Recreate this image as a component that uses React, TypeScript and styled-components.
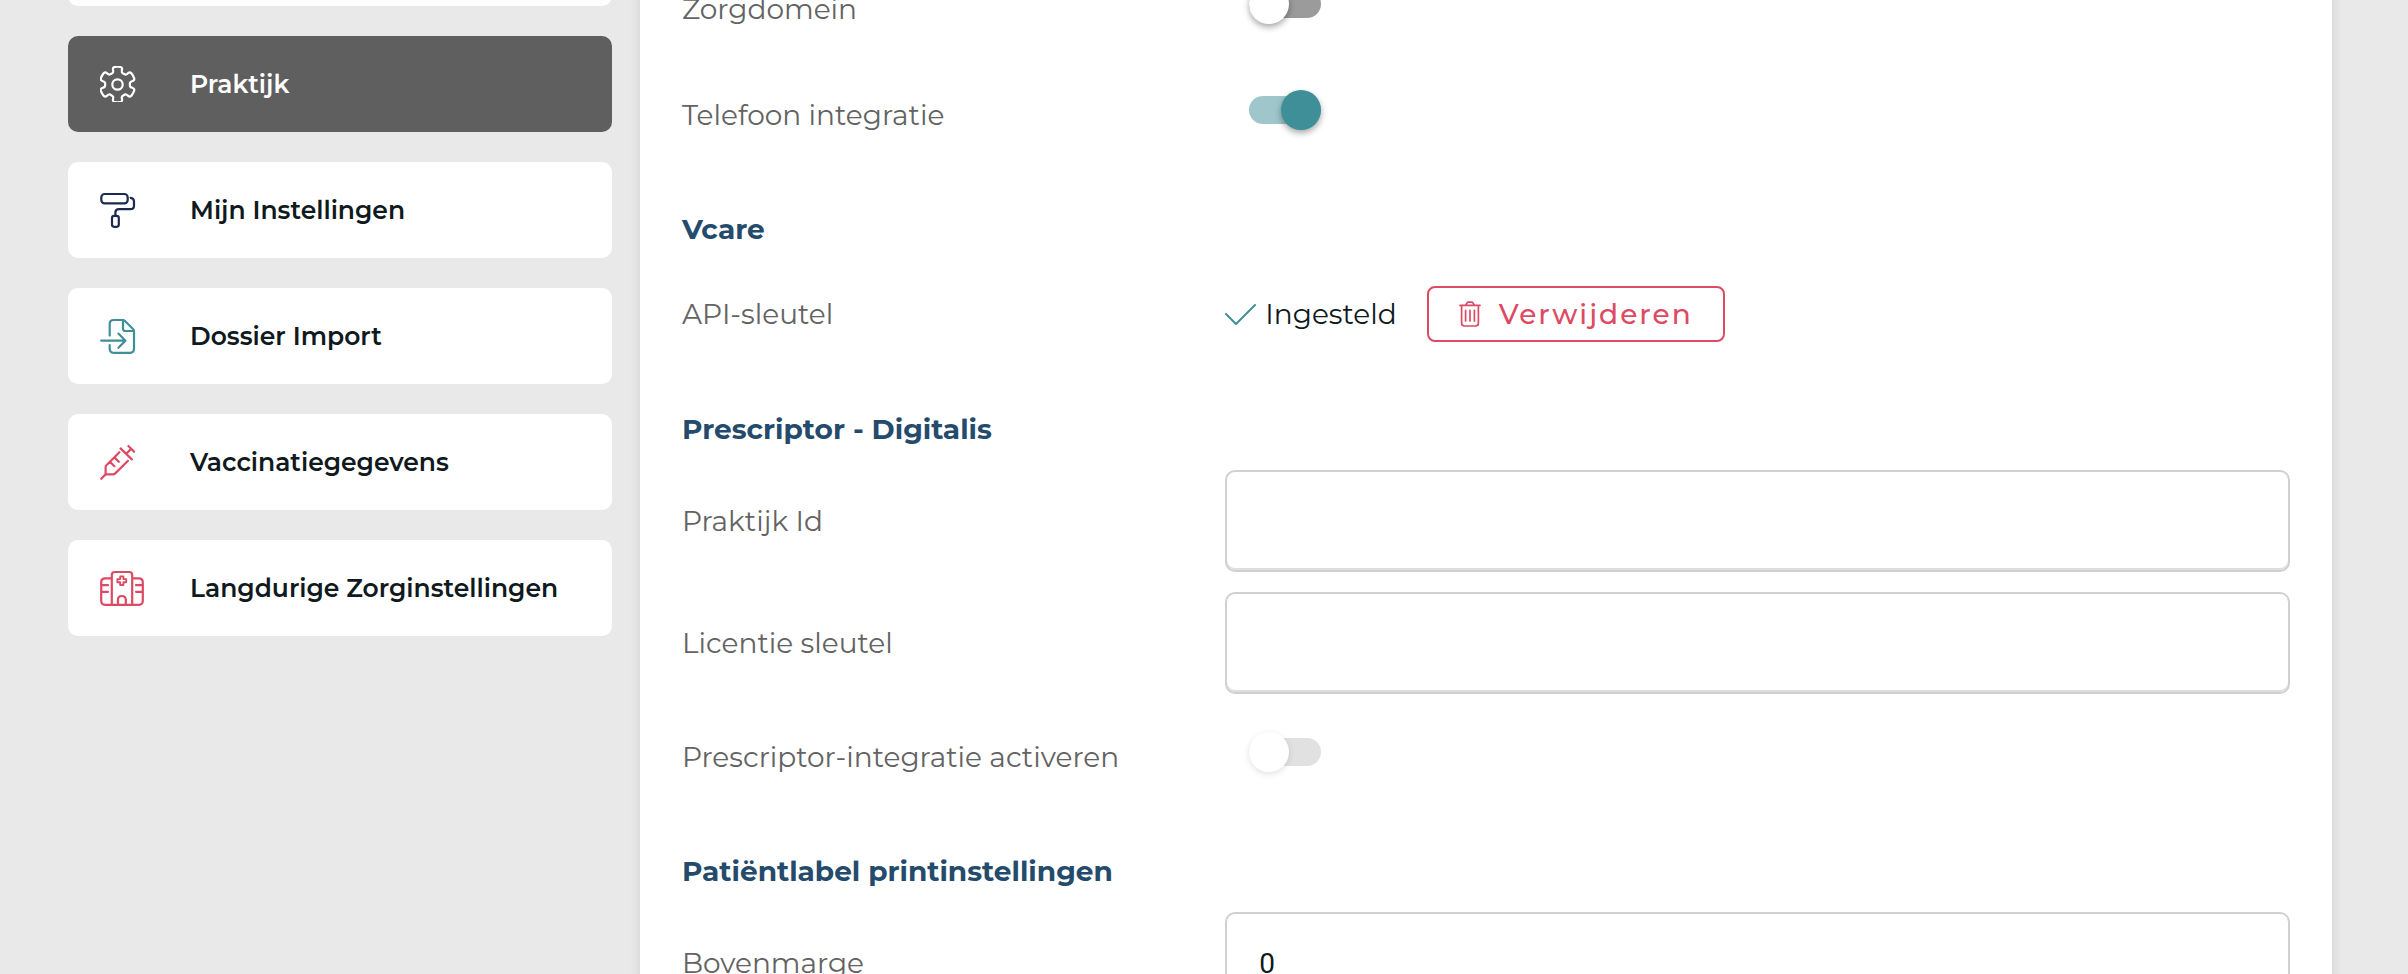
import React, { useState } from "react";
import styled, { createGlobalStyle } from "styled-components";

const color = {
  page: "#e9e9e9",
  active: "#5f5f5f",
  ink: "#0f1a20",
  label: "#636363",
  heading: "#254b6c",
  teal: "#3f8f98",
  red: "#dc4a64",
  navy: "#1c2a52",
  line: "#d0d0d0",
};

const GlobalStyle = createGlobalStyle`
  * { box-sizing: border-box; }
  body {
    margin: 0;
    background: ${color.page};
    color: ${color.ink};
    font-family: Montserrat, Inter, "Open Sans", sans-serif;
  }
`;

const Viewport = styled.div`
  height: 100vh;
  overflow: hidden;
`;

const Page = styled.div`
  display: flex;
  gap: 28px;
  margin-top: -90px;
  padding: 0 76px 0 68px;
`;

const Sidebar = styled.nav`
  flex: 0 0 544px;
  display: flex;
  flex-direction: column;
  gap: 30px;
`;

const NavCard = styled.a<{ $active?: boolean }>`
  display: flex;
  align-items: center;
  height: 96px;
  padding: 0 32px;
  border-radius: 10px;
  background: ${(p) => (p.$active ? color.active : "#fff")};
  color: ${(p) => (p.$active ? "#fff" : color.ink)};
  font-size: 25px;
  font-weight: 600;
  line-height: 34px;
  white-space: nowrap;
  text-decoration: none;
`;

const IconSlot = styled.span<{ $color: string }>`
  display: flex;
  flex: 0 0 90px;
  color: ${(p) => p.$color};
`;

const Panel = styled.main`
  flex: 1;
  display: flex;
  flex-direction: column;
  min-width: 0;
  padding: 46px 42px;
  background: #fff;
  box-shadow: 0 0 10px rgba(0, 0, 0, 0.12);
`;

const Heading = styled.h2`
  margin: 44px 0 14px;
  color: ${color.heading};
  font-size: 28px;
  font-weight: 700;
  line-height: 34px;
`;

const Row = styled.div`
  display: grid;
  grid-template-columns: 1fr 2fr;
  column-gap: 11px;
  align-items: center;
  padding: 10px 0;
`;

const ToggleRow = styled(Row)`
  height: 96px;
  margin-bottom: 10px;
`;

const KeyRow = styled(Row)`
  height: 108px;
`;

const Label = styled.label`
  color: ${color.label};
  font-size: 28px;
  font-weight: 400;
  line-height: 34px;
  white-space: nowrap;

  ${ToggleRow} & {
    padding-top: 10px;
  }
`;

const TextBox = styled.input`
  width: 100%;
  height: 102px;
  padding: 0 32px;
  border: 2px solid ${color.line};
  border-radius: 10px;
  background: #fff;
  box-shadow: inset 0 -2px 0 #dedede;
  color: ${color.ink};
  font-family: Roboto, sans-serif;
  font-size: 28px;
  font-weight: 400;
`;

const Switch = styled.input`
  appearance: none;
  position: relative;
  width: 72px;
  height: 28px;
  margin: 0 0 0 24px;
  border-radius: 14px;
  background: #9b9b9b;

  &::before {
    content: "";
    position: absolute;
    top: -6px;
    left: 0;
    width: 40px;
    height: 40px;
    border-radius: 50%;
    background: #fff;
    box-shadow: 0 3px 6px rgba(0, 0, 0, 0.35);
  }

  &:checked {
    background: #9fc6cb;
  }

  &:checked::before {
    left: 32px;
    background: ${color.teal};
  }

  &:disabled {
    background: #e1e1e1;
  }

  &:disabled::before {
    box-shadow: 0 2px 6px rgba(0, 0, 0, 0.12);
  }
`;

const KeyStatus = styled.div`
  display: flex;
  align-items: center;
  gap: 30px;
`;

const StatusText = styled.span`
  display: flex;
  align-items: center;
  gap: 8px;
  font-size: 28px;
  line-height: 34px;

  svg {
    color: ${color.teal};
  }
`;

const RemoveButton = styled.button`
  display: flex;
  align-items: center;
  gap: 18px;
  height: 56px;
  padding: 0 30px;
  border: 2px solid ${color.red};
  border-radius: 8px;
  background: #fff;
  color: ${color.red};
  font-family: inherit;
  font-size: 28px;
  font-weight: 500;
  line-height: 34px;
  letter-spacing: 2px;
`;

const Svg = ({ width, height, children }: { width: number; height: number; children: React.ReactNode }) => (
  <svg
    width={width}
    height={height}
    viewBox={`0 0 ${width} ${height}`}
    fill="none"
    stroke="currentColor"
    strokeWidth="2.2"
    strokeLinecap="round"
    strokeLinejoin="round"
    aria-hidden="true"
  >
    {children}
  </svg>
);

// Six-toothed outline, smoothed through the midpoints of its control polygon.
const gearPath = (() => {
  const points: [number, number][] = [];
  const profile: [number, number][] = [
    [12.4, -24],
    [13.2, -18],
    [18, -16],
    [18, 0],
    [18, 16],
    [13.2, 18],
    [12.4, 24],
  ];
  for (let tooth = 0; tooth < 6; tooth++) {
    for (const [r, a] of profile) {
      const t = ((tooth * 60 - 90 + a) * Math.PI) / 180;
      points.push([17.5 + r * Math.cos(t), 18.5 + r * Math.sin(t)]);
    }
  }
  const mid = (i: number) => {
    const a = points[i % points.length];
    const b = points[(i + 1) % points.length];
    return `${((a[0] + b[0]) / 2).toFixed(2)} ${((a[1] + b[1]) / 2).toFixed(2)}`;
  };
  let d = `M${mid(points.length - 1)}`;
  points.forEach((p, i) => {
    d += `Q${p[0].toFixed(2)} ${p[1].toFixed(2)} ${mid(i)}`;
  });
  return d + "Z";
})();

const GearIcon = () => (
  <Svg width={36} height={36}>
    <path d={gearPath} />
    <circle cx="17.5" cy="18.5" r="5.2" />
  </Svg>
);

const RollerIcon = () => (
  <Svg width={36} height={36}>
    <rect x="1.3" y="2" width="26.4" height="9.4" rx="3.4" />
    <path d="M30.6 5.8C33 6.2 34 7.6 34 9.4V13.4Q34 17.2 30.2 17.2H19Q15.4 17.2 15.4 20.6V23.6" />
    <rect x="12" y="23.8" width="6.8" height="11" rx="2.2" />
  </Svg>
);

const ImportIcon = () => (
  <Svg width={36} height={36}>
    <path d="M9.7 17.6V6Q9.7 2 13.7 2H22.6Q24 2 25 3L33 11Q34 12 34 13.4V30.8Q34 34.8 30 34.8H13.7Q9.7 34.8 9.7 30.8V27" />
    <path d="M23 2.2V10.4Q23 13 25.6 13H33.8M1.2 22.7H25.4M18.4 15.6 25.4 22.7 18.4 29.8" />
  </Svg>
);

const SyringeIcon = () => (
  <Svg width={36} height={36}>
    <path d="M1.2 34.8 5.6 30.4H13.2Q14.2 30.4 15 29.6L28 16.8M5.6 30.4V23Q5.6 22 6.4 21.2L19.4 8.2M10.2 18 14.4 22.2M14.6 13.6 18.8 17.8M20.6 4.4 31.8 15.4M26.3 9.7 31.2 4.8M28.4 2 34 7.6" />
  </Svg>
);

const HospitalIcon = () => (
  <Svg width={44} height={36}>
    <path d="M11.8 34.8V5Q11.8 2 14.8 2H29.2Q32.2 2 32.2 5V34.8M11.8 8.4H5.2Q1.2 8.4 1.2 12.4V30.8Q1.2 34.8 5.2 34.8H38.8Q42.8 34.8 42.8 30.8V12.4Q42.8 8.4 38.8 8.4H32.2" />
    <path d="M2 15.2H8M2 21.8H8M36 15.2H42M36 21.8H42M18 34.8V29.6Q18 26 21.9 26T25.8 29.6V34.8" />
    <path d="M20.2 6.4H23.4V9.1H26.2V12.3H23.4V15H20.2V12.3H17.4V9.1H20.2Z" strokeWidth="1.9" />
  </Svg>
);

const CheckIcon = () => (
  <Svg width={32} height={22}>
    <path d="M1 11 11 21 30 2" strokeWidth="2" />
  </Svg>
);

const TrashIcon = () => (
  <Svg width={22} height={26}>
    <g strokeWidth="1.7">
      <path d="M1 4.4H21M6.4 4.4 8 2Q8.5 1.2 9.4 1.2H12.6Q13.5 1.2 14 2L15.6 4.4M2.6 4.4V22Q2.6 25 5.6 25H16.4Q19.4 25 19.4 22V4.4" />
      <path d="M6.6 9.4V20M11 9.4V20M15.4 9.4V20" />
    </g>
  </Svg>
);

const navItems = [
  { text: "Praktijk", icon: <GearIcon />, tint: "#fff", active: true },
  { text: "Mijn Instellingen", icon: <RollerIcon />, tint: color.navy },
  { text: "Dossier Import", icon: <ImportIcon />, tint: color.teal },
  { text: "Vaccinatiegegevens", icon: <SyringeIcon />, tint: color.red },
  { text: "Langdurige Zorginstellingen", icon: <HospitalIcon />, tint: color.red },
];

const Toggle = ({ id, text, on = false, disabled = false }: { id: string; text: string; on?: boolean; disabled?: boolean }) => {
  const [checked, setChecked] = useState(on);
  return (
    <ToggleRow>
      <Label htmlFor={id}>{text}</Label>
      <Switch id={id} type="checkbox" role="switch" checked={checked} disabled={disabled} onChange={() => setChecked(!checked)} />
    </ToggleRow>
  );
};

const Field = ({ id, text, value = "" }: { id: string; text: string; value?: string }) => (
  <Row>
    <Label htmlFor={id}>{text}</Label>
    <TextBox id={id} type="text" defaultValue={value} />
  </Row>
);

export default function App() {
  return (
    <>
      <GlobalStyle />
      <Viewport>
        <Page>
          <Sidebar>
            <NavCard href="#" />
            {navItems.map((item) => (
              <NavCard key={item.text} href="#" $active={item.active}>
                <IconSlot $color={item.tint}>{item.icon}</IconSlot>
                {item.text}
              </NavCard>
            ))}
          </Sidebar>
          <Panel>
            <Toggle id="zorgdomein" text="Zorgdomein" />
            <Toggle id="telefoon" text="Telefoon integratie" on />

            <Heading>Vcare</Heading>
            <KeyRow>
              <Label as="span">API-sleutel</Label>
              <KeyStatus>
                <StatusText>
                  <CheckIcon />
                  Ingesteld
                </StatusText>
                <RemoveButton type="button">
                  <TrashIcon />
                  Verwijderen
                </RemoveButton>
              </KeyStatus>
            </KeyRow>

            <Heading>Prescriptor - Digitalis</Heading>
            <Field id="praktijk-id" text="Praktijk Id" />
            <Field id="licentie" text="Licentie sleutel" />
            <Toggle id="prescriptor" text="Prescriptor-integratie activeren" disabled />

            <Heading>Patiëntlabel printinstellingen</Heading>
            <Field id="bovenmarge" text="Bovenmarge" value="0" />
          </Panel>
        </Page>
      </Viewport>
    </>
  );
}
